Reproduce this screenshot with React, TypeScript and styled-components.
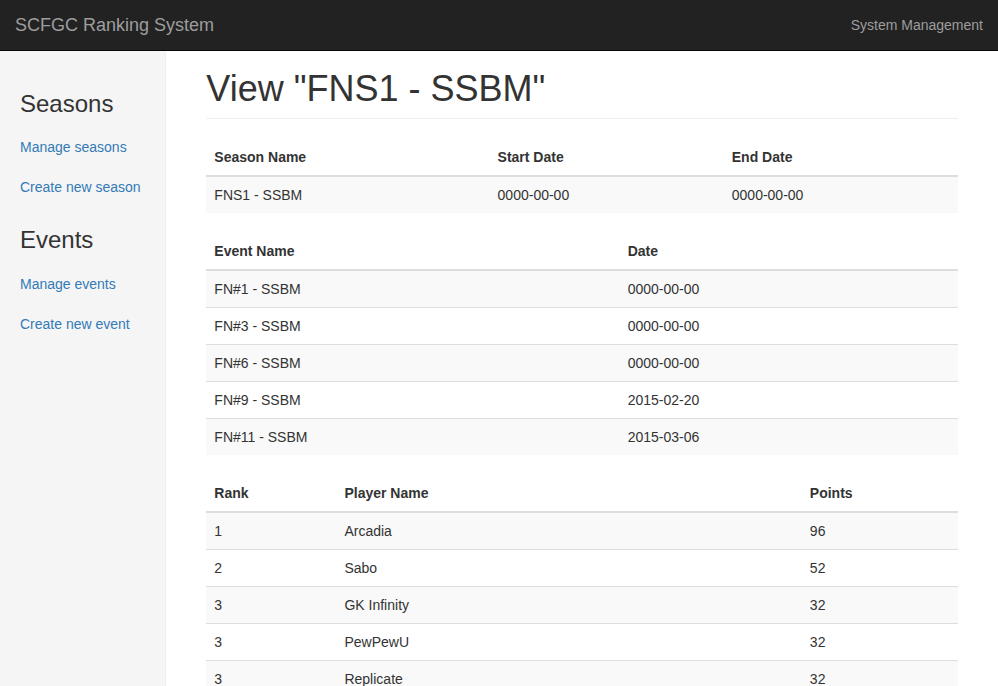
import React from "react";
import styled, { createGlobalStyle } from "styled-components";

const Global = createGlobalStyle`
  * { box-sizing: border-box; }
  body {
    margin: 0;
    font-family: "Liberation Sans", Arial, Helvetica, sans-serif;
    font-size: 14px;
    line-height: 1.42857143;
    color: #333;
    background: #fff;
  }
`;

const Navbar = styled.nav`
  height: 51px;
  background: #222;
  border-bottom: 1px solid #080808;
  display: flex;
  align-items: flex-start;
  justify-content: space-between;
`;

const Brand = styled.a`
  padding: 15px;
  font-size: 18px;
  line-height: 20px;
  color: #9d9d9d;
  text-decoration: none;
`;

const NavLink = styled.a`
  padding: 15px;
  line-height: 20px;
  color: #9d9d9d;
  text-decoration: none;
`;

const Layout = styled.div`
  display: flex;
  min-height: calc(100vh - 51px);
`;

const Sidebar = styled.aside`
  width: 16.6667%;
  flex: none;
  background: #f5f5f5;
  border-right: 1px solid #eee;
  padding: 20px;
`;

const SideHeading = styled.h3`
  margin: 20px 0 10px;
  font-size: 24px;
  line-height: 1.1;
  font-weight: 500;
  color: #333;
`;

const SideNav = styled.ul`
  list-style: none;
  margin: 0;
  padding: 0;
`;

const SideLink = styled.a`
  display: block;
  padding: 10px 0;
  line-height: 20px;
  color: #337ab7;
  text-decoration: none;
`;

const Main = styled.main`
  flex: 1;
  min-width: 0;
  padding: 18px 40px 20px;
`;

const PageHeader = styled.h1`
  margin: 0 0 20px;
  padding-bottom: 9px;
  border-bottom: 1px solid #eee;
  font-size: 36px;
  line-height: 1.1;
  font-weight: 500;
  color: #333;
`;

const Table = styled.table`
  width: 100%;
  table-layout: fixed;
  border-collapse: collapse;
  border-spacing: 0;
  margin-bottom: 20px;
`;

const Col = styled.col<{ $w: number }>`
  width: ${(p) => p.$w}px;
`;

const Th = styled.th`
  text-align: left;
  font-weight: bold;
  padding: 8px;
  line-height: 20px;
  vertical-align: bottom;
  border-bottom: 2px solid #ddd;
`;

const Tr = styled.tr`
  &:nth-of-type(odd) {
    background: #f9f9f9;
  }
`;

const Td = styled.td`
  padding: 8px;
  line-height: 20px;
  vertical-align: top;
  border-top: 1px solid #ddd;
`;

type TableData = { cols: number[]; head: string[]; rows: string[][] };

const tables: TableData[] = [
  {
    cols: [283, 234, 234],
    head: ["Season Name", "Start Date", "End Date"],
    rows: [["FNS1 - SSBM", "0000-00-00", "0000-00-00"]],
  },
  {
    cols: [413, 338],
    head: ["Event Name", "Date"],
    rows: [
      ["FN#1 - SSBM", "0000-00-00"],
      ["FN#3 - SSBM", "0000-00-00"],
      ["FN#6 - SSBM", "0000-00-00"],
      ["FN#9 - SSBM", "2015-02-20"],
      ["FN#11 - SSBM", "2015-03-06"],
    ],
  },
  {
    cols: [130, 465, 156],
    head: ["Rank", "Player Name", "Points"],
    rows: [
      ["1", "Arcadia", "96"],
      ["2", "Sabo", "52"],
      ["3", "GK Infinity", "32"],
      ["3", "PewPewU", "32"],
      ["3", "Replicate", "32"],
      ["6", "Lucky", "24"],
      ["6", "Zeal", "24"],
    ],
  },
];

const DataTable = ({ t }: { t: TableData }) => (
  <Table>
    <colgroup>
      {t.cols.map((w, i) => (
        <Col key={i} $w={w} />
      ))}
    </colgroup>
    <thead>
      <tr>
        {t.head.map((h) => (
          <Th key={h}>{h}</Th>
        ))}
      </tr>
    </thead>
    <tbody>
      {t.rows.map((r, i) => (
        <Tr key={i}>
          {r.map((c, j) => (
            <Td key={j}>{c}</Td>
          ))}
        </Tr>
      ))}
    </tbody>
  </Table>
);

export default function App() {
  return (
    <>
      <Global />
      <Navbar>
        <Brand href="#">SCFGC Ranking System</Brand>
        <NavLink href="#">System Management</NavLink>
      </Navbar>
      <Layout>
        <Sidebar>
          <SideHeading>Seasons</SideHeading>
          <SideNav>
            <li><SideLink href="#">Manage seasons</SideLink></li>
            <li><SideLink href="#">Create new season</SideLink></li>
          </SideNav>
          <SideHeading>Events</SideHeading>
          <SideNav>
            <li><SideLink href="#">Manage events</SideLink></li>
            <li><SideLink href="#">Create new event</SideLink></li>
          </SideNav>
        </Sidebar>
        <Main>
          <PageHeader>View "FNS1 - SSBM"</PageHeader>
          {tables.map((t, i) => (
            <DataTable key={i} t={t} />
          ))}
        </Main>
      </Layout>
    </>
  );
}
